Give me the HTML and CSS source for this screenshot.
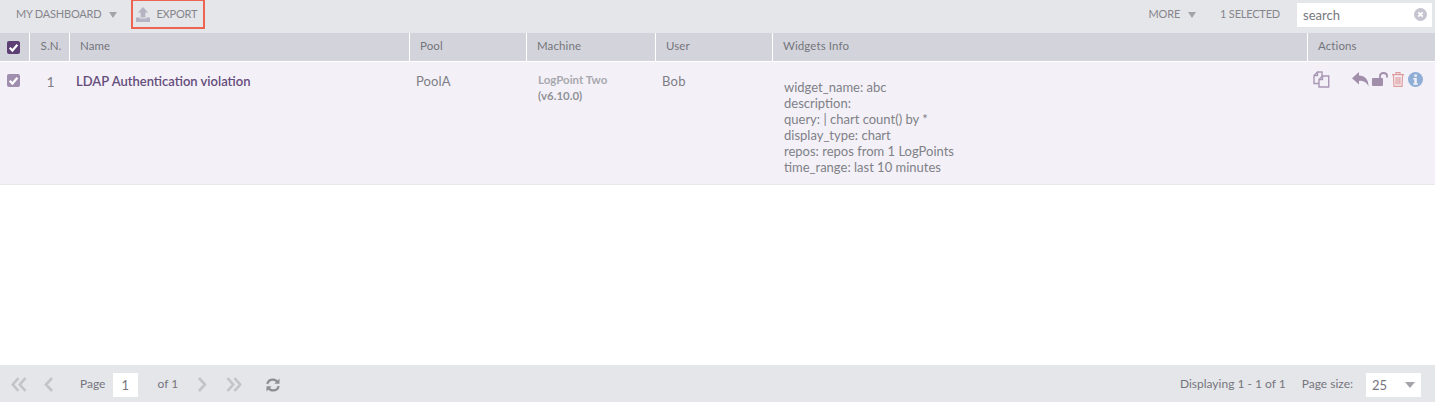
FILE: index.html
```html
<!DOCTYPE html>
<html lang="en">
<head>
    <meta charset="UTF-8">
    <title>My Dashboard</title>
    <link rel="stylesheet" href="styles.css">
</head>
<body>
    <div class="page">
        <div class="toolbar">
            <a class="tool-link">MY DASHBOARD<span class="caret"></span></a>
            <a class="export-btn">
                <svg class="export-icon" width="14" height="15" viewBox="0 0 15 15" preserveAspectRatio="none"><path d="M7.5 0 13 5.5H10V10.5H5V5.5H2Z" fill="#b5b3c4"/><path d="M0 10.5H4V11.5H11V10.5H15V15H0Z" fill="#b5b3c4"/></svg>
                EXPORT
            </a>
            <div class="spacer"></div>
            <a class="tool-link">MORE<span class="caret"></span></a>
            <span class="selected">1 SELECTED</span>
            <div class="search-box">
                <span>search</span>
                <svg class="clear-icon" width="13" height="13" viewBox="0 0 13 13"><circle cx="6.5" cy="6.5" r="6.5" fill="#c5c4d0"/><path d="M4.3 4.3 8.7 8.7M8.7 4.3 4.3 8.7" stroke="#fff" stroke-width="1.8"/></svg>
            </div>
        </div>

        <table class="grid">
            <colgroup>
                <col class="col-check">
                <col class="col-sn">
                <col class="col-name">
                <col class="col-pool">
                <col class="col-machine">
                <col class="col-user">
                <col class="col-info">
                <col class="col-actions">
            </colgroup>
            <thead>
                <tr>
                    <th class="check-cell"><span class="checkbox dark"><svg width="13" height="13" viewBox="0 0 12 12"><path d="M2.5 6.2 5 8.8 9.6 3.4" fill="none" stroke="#fff" stroke-width="2"/></svg></span></th>
                    <th class="center">S.N.</th>
                    <th>Name</th>
                    <th>Pool</th>
                    <th>Machine</th>
                    <th>User</th>
                    <th>Widgets Info</th>
                    <th>Actions</th>
                </tr>
            </thead>
            <tbody>
                <tr>
                    <td class="check-cell"><span class="checkbox light"><svg width="13" height="13" viewBox="0 0 12 12"><path d="M2.5 6.2 5 8.8 9.6 3.4" fill="none" stroke="#fff" stroke-width="2"/></svg></span></td>
                    <td class="center sn">1</td>
                    <td class="name">LDAP Authentication violation</td>
                    <td class="pool">PoolA</td>
                    <td class="machine">LogPoint Two<br><span class="version">(v6.10.0)</span></td>
                    <td class="user">Bob</td>
                    <td class="info">
                        widget_name: abc<br>
                        description:<br>
                        query: | chart count() by *<br>
                        display_type: chart<br>
                        repos: repos from 1 LogPoints<br>
                        time_range: last 10 minutes
                    </td>
                    <td class="actions">
                        <div class="action-icons">
                            <svg class="icon-copy" width="17" height="17" viewBox="0 0 17 17" fill="none" stroke="#a897b5" stroke-width="1.4"><path d="M6 12.5H1V4.5L4.5 1H9V5"/><path d="M4.5 1V4.5H1"/><path d="M6 8.5 9.5 5H15.7V16H6Z"/><path d="M9.5 5V8.5H6"/></svg>
                            <svg class="icon-reply" width="17" height="15" viewBox="0 0 17 15"><path d="M7 0V3.6C13 3.8 16.5 7.5 16.5 14.5 14.8 10.5 12 8.8 7 8.8V12.5L0 6.2Z" fill="#a08eaa"/></svg>
                            <svg class="icon-lock" width="16" height="14" viewBox="0 0 16 14"><rect x="0" y="6" width="11" height="8" rx="1" fill="#a08eaa"/><path d="M8 6V3.8C8 2 9.3 1 11.4 1S15 2 15 3.8V5.5" fill="none" stroke="#a08eaa" stroke-width="1.8"/></svg>
                            <svg class="icon-trash" width="12" height="15" viewBox="0 0 12 15" fill="none" stroke="#de9c9c" stroke-width="1.2"><path d="M0 2.6H12M4 2.4V.7H8V2.4"/><path d="M1.4 2.8 2 14.4H10L10.6 2.8"/><path d="M4.1 5V12.5M6 5V12.5M7.9 5V12.5"/></svg>
                            <svg class="icon-info" width="15" height="15" viewBox="0 0 14 14"><circle cx="7" cy="7" r="7" fill="#8eaed6"/><rect x="5.9" y="2.3" width="2.4" height="2.2" fill="#f3f1f7"/><path d="M4.9 5.6H8.2V10.4H9.2V11.8H4.9V10.4H5.9V7H4.9Z" fill="#f3f1f7"/></svg>
                        </div>
                    </td>
                </tr>
            </tbody>
        </table>

        <div class="empty"></div>

        <div class="pager">
            <svg class="pg-icon first-pg" width="16" height="15" viewBox="0 0 16 15" fill="none" stroke="#c3c3c8" stroke-width="2.6"><path d="M7.5 1 1.8 7.5 7.5 14M14.5 1 8.8 7.5 14.5 14"/></svg>
            <svg class="pg-icon prev-pg" width="9" height="15" viewBox="0 0 9 15" fill="none" stroke="#c3c3c8" stroke-width="2.6"><path d="M8 1 2 7.5 8 14"/></svg>
            <span class="pg-label page-label">Page</span>
            <span class="pg-input">1</span>
            <span class="pg-of">of 1</span>
            <svg class="pg-icon next-pg" width="9" height="15" viewBox="0 0 9 15" fill="none" stroke="#c3c3c8" stroke-width="2.6"><path d="M1 1 7 7.5 1 14"/></svg>
            <svg class="pg-icon last-pg" width="16" height="15" viewBox="0 0 16 15" fill="none" stroke="#c3c3c8" stroke-width="2.6"><path d="M1.5 1 7.2 7.5 1.5 14M8.5 1 14.2 7.5 8.5 14"/></svg>
            <svg class="pg-icon refresh" width="14" height="14" viewBox="0 0 14 14" fill="none" stroke="#8e8e94" stroke-width="2.2"><path d="M1.3 6C1.8 3.5 4.2 1.6 7 1.6 9 1.6 10.6 2.6 11.6 4.4"/><path d="M12.7 8C12.2 10.5 9.8 12.4 7 12.4 5 12.4 3.4 11.4 2.4 9.6"/><path d="M13.5 .5V5.8H8.4Z" fill="#8e8e94" stroke="none"/><path d="M.5 13.5V8.2H5.6Z" fill="#8e8e94" stroke="none"/></svg>
            <div class="spacer"></div>
            <span class="pg-label">Displaying 1 - 1 of 1</span>
            <span class="pg-label size-label">Page size:</span>
            <div class="pg-select">25<span class="caret"></span></div>
        </div>
    </div>
</body>
</html>
```

FILE: styles.css
```css
html, body {
    margin: 0;
    padding: 0;
    background: #fff;
}
body {
    font-family: Lato, "Open Sans", sans-serif;
    font-size: 13px;
    color: #7d7d85;
}
.page {
    display: flex;
    flex-direction: column;
    height: 402px;
    overflow: hidden;
}
.spacer {
    flex: 1;
}
.caret {
    display: inline-block;
    width: 0;
    height: 0;
    border-left: 4.5px solid transparent;
    border-right: 4.5px solid transparent;
    border-top: 6px solid #a3a3aa;
    margin-left: 8px;
    vertical-align: 0;
}

/* Top toolbar */
.toolbar {
    display: flex;
    align-items: center;
    height: 33px;
    box-sizing: border-box;
    padding: 0 3px 6px 16px;
    background: #e5e6ea;
    font-size: 11px;
    letter-spacing: -0.2px;
    color: #85858c;
}
.tool-link {
    white-space: nowrap;
}
.export-btn {
    display: flex;
    align-items: center;
    align-self: flex-start;
    box-sizing: border-box;
    height: 29px;
    margin-left: 14px;
    padding: 0 6px 1px 3px;
    border: 2px solid #ee6452;
    border-top-width: 1px;
    gap: 6px;
}
.export-icon {
    margin-top: 1px;
}
.selected {
    margin-left: 24px;
    margin-right: 17px;
}
.search-box {
    display: flex;
    align-items: center;
    justify-content: space-between;
    box-sizing: border-box;
    width: 135px;
    height: 24px;
    margin-top: 3px;
    padding: 0 5px 1px 6px;
    background: #fff;
    font-size: 13px;
    letter-spacing: 0;
    color: #77777e;
}

/* Grid */
.grid {
    width: 1435px;
    table-layout: fixed;
    border-collapse: separate;
    border-spacing: 0;
}
.col-check { width: 29px; }
.col-sn { width: 40px; }
.col-name { width: 340px; }
.col-pool { width: 117px; }
.col-machine { width: 129px; }
.col-user { width: 117px; }
.col-info { width: 535px; }
.col-actions { width: 128px; }
.grid th {
    box-sizing: border-box;
    height: 28px;
    padding: 0 0 4px 10px;
    background: #d3d4db;
    border-left: 1px solid #fff;
    font-weight: 400;
    font-size: 11.5px;
    text-align: left;
    color: #75757c;
    letter-spacing: 0.1px;
}
.grid th:first-child {
    border-left: none;
}
.grid th.check-cell {
    padding: 0;
}
.grid th.center {
    padding: 0 0 4px 3px;
    text-align: center;
}
.grid td {
    box-sizing: border-box;
    height: 124px;
    padding: 10px 0 0 7px;
    vertical-align: top;
    background: #f3f1f7;
    border-bottom: 1px solid #e8e8ec;
    border-top: 1px solid #fff;
}
.grid td.check-cell {
    padding: 12px 0 0 0;
}
.checkbox {
    display: block;
    width: 13px;
    height: 13px;
    margin-left: 7px;
    border-radius: 2px;
}
.checkbox svg {
    display: block;
}
.checkbox.dark {
    background: #5d3f73;
}
.checkbox.light {
    background: #a08eaf;
}
.grid td.center {
    padding-left: 3px;
    text-align: center;
}
.grid td.sn {
    font-size: 14px;
    padding-top: 11px;
}
.grid td.name {
    padding-top: 11px;
    font-size: 13px;
    font-weight: 600;
    color: #654c7c;
}
.grid td.pool {
    padding-top: 11px;
    font-size: 13px;
    letter-spacing: 0.1px;
}
.grid td.machine {
    padding-left: 12px;
    font-size: 11.5px;
    font-weight: 700;
    color: #a8a8ae;
    line-height: 16px;
}
.version {
    color: #919198;
}
.grid td.user {
    padding-top: 11px;
    font-size: 13px;
    letter-spacing: 0.3px;
}
.grid td.info {
    padding-left: 12px;
    padding-top: 17px;
    font-size: 13px;
    line-height: 16px;
    color: #808087;
}
.grid td.actions {
    padding: 9px 0 0 6px;
}
.action-icons {
    display: flex;
    align-items: flex-start;
}
.icon-reply { margin-left: 22px; margin-top: 1px; }
.icon-lock { margin-left: 3px; margin-top: 1px; }
.icon-trash { margin-left: 4px; margin-top: 1px; }
.icon-info { margin-left: 4px; margin-top: 1px; }
.empty {
    flex: 1;
}

/* Pager */
.pager {
    display: flex;
    align-items: center;
    height: 37px;
    padding: 0 14px 0 11px;
    background: #e5e6ea;
    font-size: 12px;
    color: #75757c;
}
.pg-icon { margin-top: 2px; }
.prev-pg { margin-left: 17px; }
.page-label { margin-left: 27px; }
.pg-input {
    box-sizing: border-box;
    width: 25px;
    height: 24px;
    margin-top: 3px;
    margin-left: 8px;
    padding: 4px 0 0 8px;
    background: #fff;
    font-size: 13px;
}
.pg-of { margin-left: 19px; }
.next-pg { margin-left: 20px; }
.last-pg { margin-left: 19px; }
.refresh { margin-left: 24px; }
.size-label { margin-left: 16px; }
.pg-select {
    display: flex;
    align-items: center;
    justify-content: space-between;
    box-sizing: border-box;
    width: 55px;
    height: 24px;
    margin-top: 3px;
    margin-left: 13px;
    padding: 0 6px 0 6px;
    background: #fff;
    font-size: 13px;
}
.pg-select .caret {
    border-left-width: 5.5px;
    border-right-width: 5.5px;
}
```
